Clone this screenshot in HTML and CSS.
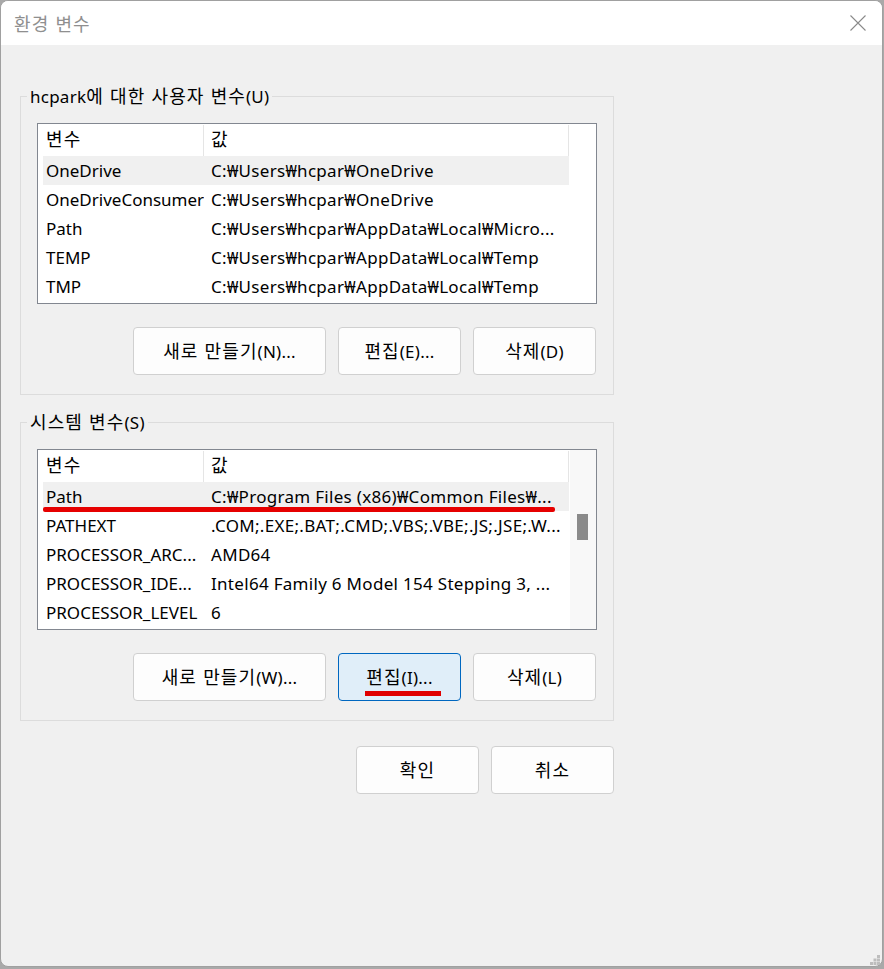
FILE: index.html
```html
<!DOCTYPE html>
<html lang="ko">
<head>
<meta charset="utf-8">
<title>환경 변수</title>
<link rel="stylesheet" href="styles.css">
</head>
<body>
<div class="window">
  <div class="titlebar">
    <span class="title ko">환경 변수</span>
    <svg class="close" width="16" height="16" viewBox="0 0 16 16"><path d="M0.5 0.5 L15.5 15.5 M15.5 0.5 L0.5 15.5" stroke="#8a8a8a" stroke-width="1.1" fill="none"/></svg>
  </div>
  <div class="content">
    <fieldset class="group">
      <legend>hcpark<span class="ko">에 대한 사용자 변수</span>(U)</legend>
      <div class="list">
        <div class="rows">
          <div class="row head"><div class="c1"><span class="ko">변수</span></div><div class="c2"><span class="ko">값</span></div></div>
          <div class="row sel"><div class="c1">OneDrive</div><div class="c2">C:₩Users₩hcpar₩OneDrive</div></div>
          <div class="row"><div class="c1">OneDriveConsumer</div><div class="c2">C:₩Users₩hcpar₩OneDrive</div></div>
          <div class="row"><div class="c1">Path</div><div class="c2">C:₩Users₩hcpar₩AppData₩Local₩Micro...</div></div>
          <div class="row"><div class="c1">TEMP</div><div class="c2">C:₩Users₩hcpar₩AppData₩Local₩Temp</div></div>
          <div class="row"><div class="c1">TMP</div><div class="c2">C:₩Users₩hcpar₩AppData₩Local₩Temp</div></div>
        </div>
        <div class="noscroll"></div>
      </div>
      <div class="btnrow">
        <button class="btn wide"><span class="ko">새로 만들기</span>(N)...</button>
        <button class="btn"><span class="ko">편집</span>(E)...</button>
        <button class="btn"><span class="ko">삭제</span>(D)</button>
      </div>
    </fieldset>

    <fieldset class="group second">
      <legend><span class="ko">시스템 변수</span>(S)</legend>
      <div class="list">
        <div class="rows">
          <div class="row head"><div class="c1"><span class="ko">변수</span></div><div class="c2"><span class="ko">값</span></div></div>
          <div class="row sel"><div class="c1">Path</div><div class="c2">C:₩Program Files (x86)₩Common Files₩...</div><span class="redline"></span></div>
          <div class="row"><div class="c1">PATHEXT</div><div class="c2">.COM;.EXE;.BAT;.CMD;.VBS;.VBE;.JS;.JSE;.W...</div></div>
          <div class="row"><div class="c1">PROCESSOR_ARC...</div><div class="c2">AMD64</div></div>
          <div class="row"><div class="c1">PROCESSOR_IDE...</div><div class="c2">Intel64 Family 6 Model 154 Stepping 3, ...</div></div>
          <div class="row"><div class="c1">PROCESSOR_LEVEL</div><div class="c2">6</div></div>
        </div>
        <div class="scrollbar"><div class="thumb"></div></div>
      </div>
      <div class="btnrow">
        <button class="btn wide"><span class="ko">새로 만들기</span>(W)...</button>
        <button class="btn focus"><span class="ko">편집</span>(I)...<span class="btnline"></span></button>
        <button class="btn"><span class="ko">삭제</span>(L)</button>
      </div>
    </fieldset>

    <div class="okrow">
      <button class="btn"><span class="ko">확인</span></button>
      <button class="btn"><span class="ko">취소</span></button>
    </div>
  </div>
  <div class="footer">
    <svg width="10" height="10" viewBox="0 0 10 10"><g fill="#bdbdbd"><rect x="7" y="0" width="3" height="3"/><rect x="3.5" y="3.5" width="3" height="3"/><rect x="7" y="3.5" width="3" height="3"/><rect x="0" y="7" width="3" height="3"/><rect x="3.5" y="7" width="3" height="3"/><rect x="7" y="7" width="3" height="3"/></g></svg>
  </div>
</div>
</body>
</html>
```
FILE: styles.css
```css
* { box-sizing: border-box; }
html, body { margin: 0; padding: 0; }
body {
  background: #a9a9a9;
  width: 884px;
  height: 969px;
  overflow: hidden;
  font-family: "Noto Sans", "Noto Sans CJK KR", sans-serif;
  font-size: 17px;
  letter-spacing: 0.25px;
  color: #000;
}
.ko {
  font-family: "Noto Sans CJK KR", sans-serif;
  font-size: 18px;
  letter-spacing: 1.1px;
  line-height: 20px;
}
.window {
  width: 883px;
  height: 967px;
  border: 1px solid #a0a0a0;
  border-radius: 8px;
  background: #f0f0f0;
  overflow: hidden;
  display: flex;
  flex-direction: column;
}
.titlebar {
  height: 44px;
  background: #fff;
  display: flex;
  align-items: center;
  justify-content: space-between;
  padding: 0 16px 0 13px;
  flex: none;
}
.title {
  color: #8f8f8f;
  margin-top: -1px;
}
.close { display: block; margin-top: -1px; }
.content {
  padding-left: 19px;
  flex: 1;
}
.group {
  margin: 40px 0 0 0;
  width: 594px;
  border: 1px solid #dcdcdc;
  padding: 0 16px 19px 16px;
  min-width: 0;
}
.group.second { margin-top: 16px; }
.group legend {
  height: 22px;
  line-height: 22px;
  padding: 0 3px;
  margin-left: -10px;
  white-space: nowrap;
}
.list {
  margin-top: 16px;
  height: 181px;
  border: 1px solid #828790;
  background: #fff;
  display: flex;
  padding-left: 5px;
}
.rows { width: 526px; flex: none; }
.row {
  display: flex;
  height: 29px;
  line-height: 30px;
  white-space: nowrap;
  position: relative;
}
.row.head { height: 32px; }
.row.head .c1, .row.head .c2 {
  border-right: 1px solid #e5e5e5;
  height: 31px;
  margin-top: 1px;
  line-height: 29px;
}
.row.sel { background: #f0f0f0; }
.c1 { width: 161px; padding-left: 3px; flex: none; overflow: hidden; letter-spacing: 0; }
.c2 { flex: 1; padding-left: 7px; overflow: hidden; letter-spacing: 0.3px; }
.noscroll { flex: 1; }
.scrollbar {
  flex: 1;
  background: #f8f8f8;
  border-left: 1px solid #fff;
  padding-top: 64px;
}
.thumb {
  width: 11px;
  height: 26px;
  margin-left: 7px;
  background: #8a8a8a;
}
.redline {
  position: absolute;
  left: 0;
  top: 25px;
  width: 512px;
  height: 5px;
  background: #e60000;
  border-radius: 2px;
}
.btnrow {
  display: flex;
  justify-content: flex-end;
  gap: 12px;
  margin-top: 23px;
  padding-right: 1px;
}
.btn {
  width: 123px;
  height: 48px;
  border: 1px solid #d0d0d0;
  border-radius: 4px;
  background: #fdfdfd;
  font-family: "Noto Sans", "Noto Sans CJK KR", sans-serif;
  font-size: 17px;
  letter-spacing: 0.25px;
  color: #000;
  padding: 0;
  position: relative;
}
.btn.wide { width: 193px; }
.btn.focus {
  background: #e0eef9;
  border-color: #0067c0;
}
.btnline {
  position: absolute;
  left: 26px;
  top: 37px;
  width: 76px;
  height: 5px;
  background: #e00000;
}
.okrow {
  width: 594px;
  display: flex;
  justify-content: flex-end;
  gap: 12px;
  margin-top: 25px;
  padding-right: 0;
}
.footer {
  flex: none;
  display: flex;
  justify-content: flex-end;
  padding: 0 2px 1px 0;
}
.footer svg { display: block; }
```
